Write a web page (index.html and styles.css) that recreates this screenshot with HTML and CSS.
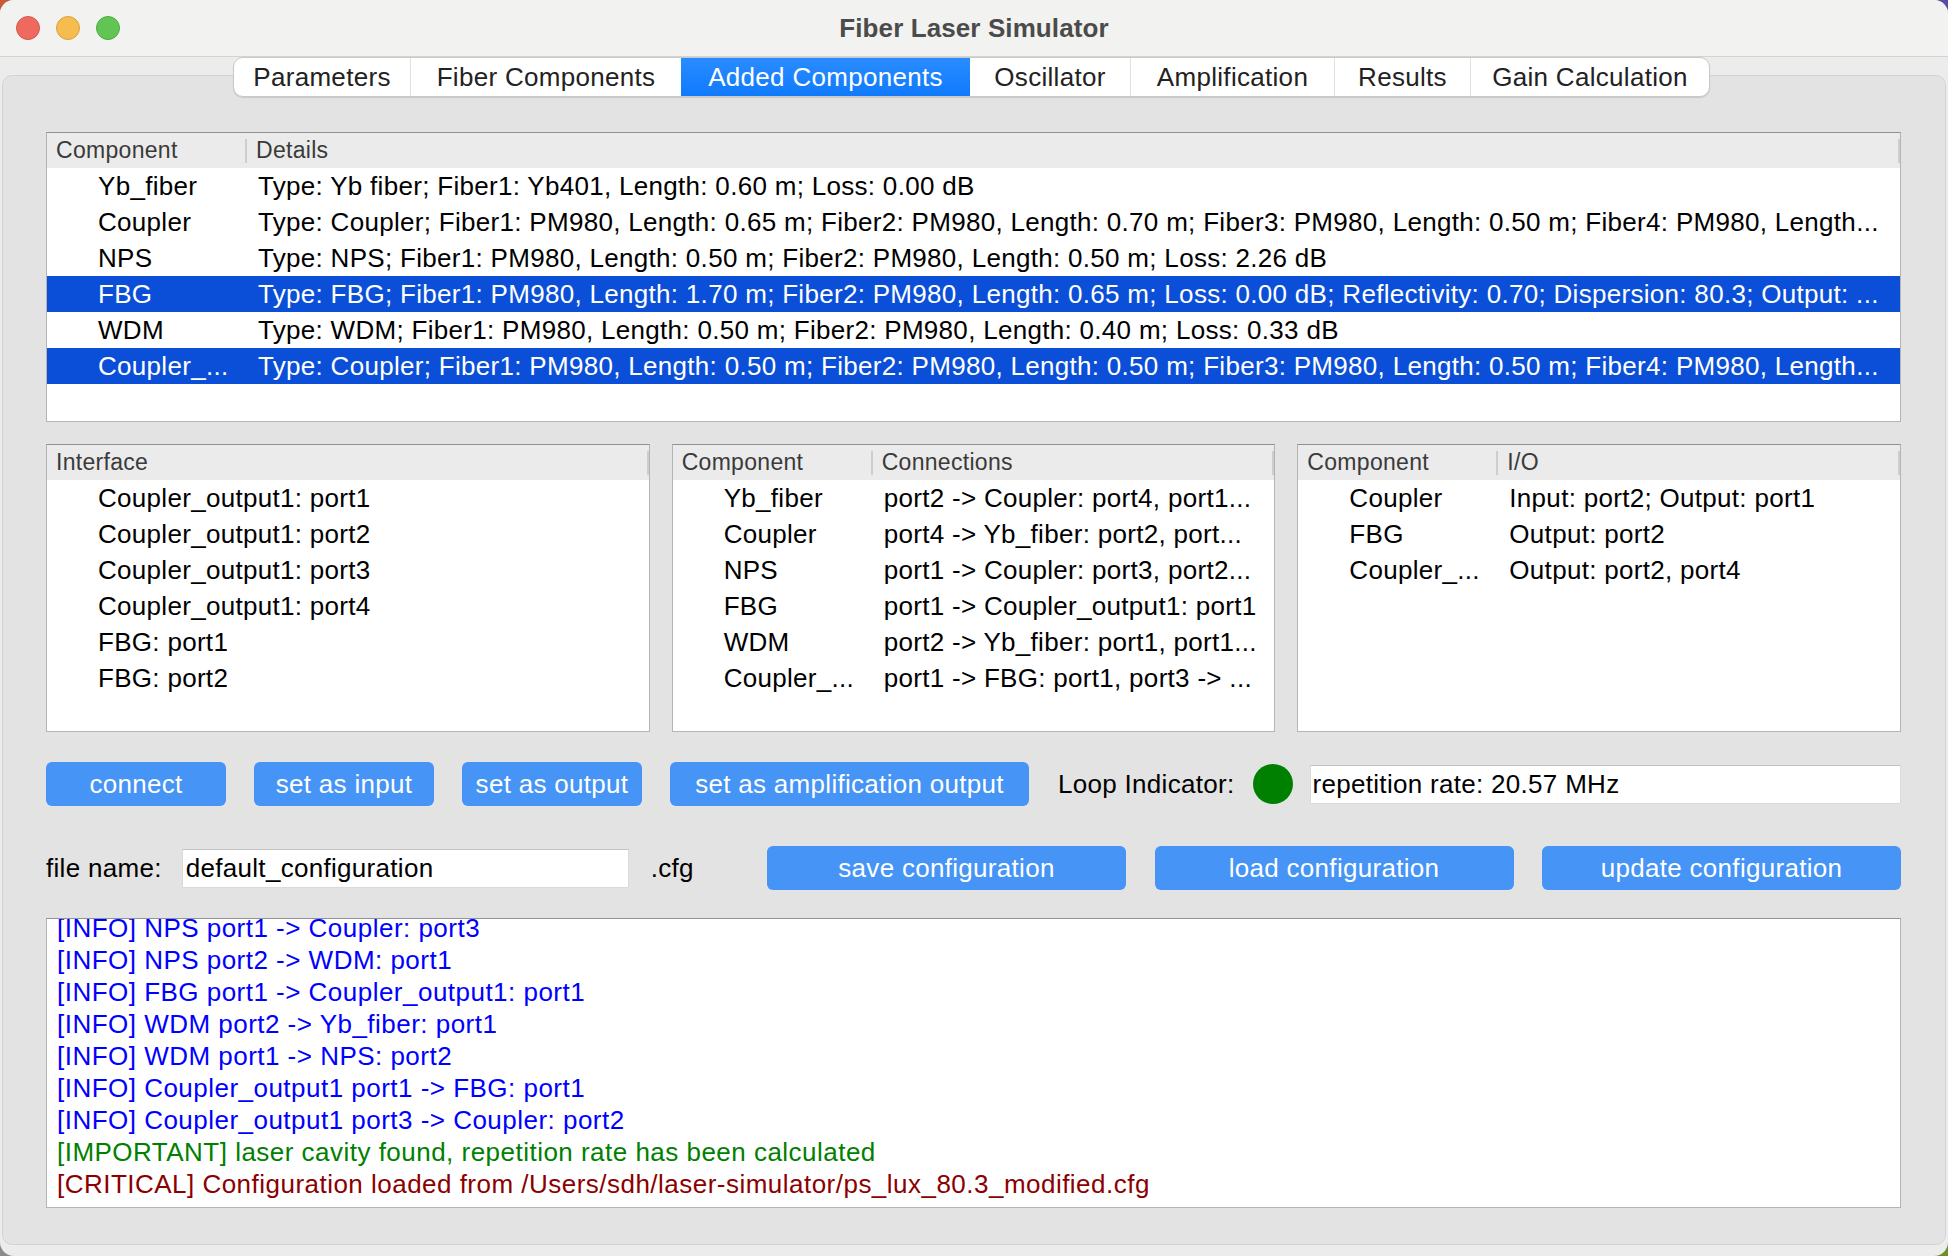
FILE: index.html
```html
<!DOCTYPE html>
<html lang="en">
<head>
<meta charset="utf-8">
<title>Fiber Laser Simulator</title>
<link rel="stylesheet" href="styles.css">
</head>
<body>
<div class="window">
  <div class="titlebar">
    <div class="lights">
      <span class="light red"></span>
      <span class="light yellow"></span>
      <span class="light green"></span>
    </div>
    <div class="title">Fiber Laser Simulator</div>
    <div></div>
  </div>

  <div class="tabs-wrap">
    <div class="tabs">
      <div class="tab t1">Parameters</div>
      <div class="tab t2">Fiber Components</div>
      <div class="tab t3 active">Added Components</div>
      <div class="tab t4">Oscillator</div>
      <div class="tab t5">Amplification</div>
      <div class="tab t6">Results</div>
      <div class="tab t7">Gain Calculation</div>
    </div>
  </div>

  <div class="pane">
    <div class="tree tree-top">
      <div class="thead">
        <div class="th c1">Component</div>
        <div class="th c2 last">Details</div>
      </div>
      <div class="tr"><div class="td c1">Yb_fiber</div><div class="td c2">Type: Yb fiber; Fiber1: Yb401, Length: 0.60 m; Loss: 0.00 dB</div></div>
      <div class="tr"><div class="td c1">Coupler</div><div class="td c2">Type: Coupler; Fiber1: PM980, Length: 0.65 m; Fiber2: PM980, Length: 0.70 m; Fiber3: PM980, Length: 0.50 m; Fiber4: PM980, Length...</div></div>
      <div class="tr"><div class="td c1">NPS</div><div class="td c2">Type: NPS; Fiber1: PM980, Length: 0.50 m; Fiber2: PM980, Length: 0.50 m; Loss: 2.26 dB</div></div>
      <div class="tr sel"><div class="td c1">FBG</div><div class="td c2">Type: FBG; Fiber1: PM980, Length: 1.70 m; Fiber2: PM980, Length: 0.65 m; Loss: 0.00 dB; Reflectivity: 0.70; Dispersion: 80.3; Output: ...</div></div>
      <div class="tr"><div class="td c1">WDM</div><div class="td c2">Type: WDM; Fiber1: PM980, Length: 0.50 m; Fiber2: PM980, Length: 0.40 m; Loss: 0.33 dB</div></div>
      <div class="tr sel"><div class="td c1">Coupler_...</div><div class="td c2">Type: Coupler; Fiber1: PM980, Length: 0.50 m; Fiber2: PM980, Length: 0.50 m; Fiber3: PM980, Length: 0.50 m; Fiber4: PM980, Length...</div></div>
    </div>

    <div class="grid3">
      <div class="tree">
        <div class="thead">
          <div class="th last">Interface</div>
        </div>
        <div class="tr"><div class="td c1 wide">Coupler_output1: port1</div></div>
        <div class="tr"><div class="td c1 wide">Coupler_output1: port2</div></div>
        <div class="tr"><div class="td c1 wide">Coupler_output1: port3</div></div>
        <div class="tr"><div class="td c1 wide">Coupler_output1: port4</div></div>
        <div class="tr"><div class="td c1 wide">FBG: port1</div></div>
        <div class="tr"><div class="td c1 wide">FBG: port2</div></div>
      </div>

      <div class="tree">
        <div class="thead">
          <div class="th c1">Component</div>
          <div class="th c2 last">Connections</div>
        </div>
        <div class="tr"><div class="td c1">Yb_fiber</div><div class="td c2">port2 -&gt; Coupler: port4, port1...</div></div>
        <div class="tr"><div class="td c1">Coupler</div><div class="td c2">port4 -&gt; Yb_fiber: port2, port...</div></div>
        <div class="tr"><div class="td c1">NPS</div><div class="td c2">port1 -&gt; Coupler: port3, port2...</div></div>
        <div class="tr"><div class="td c1">FBG</div><div class="td c2">port1 -&gt; Coupler_output1: port1</div></div>
        <div class="tr"><div class="td c1">WDM</div><div class="td c2">port2 -&gt; Yb_fiber: port1, port1...</div></div>
        <div class="tr"><div class="td c1">Coupler_...</div><div class="td c2">port1 -&gt; FBG: port1, port3 -&gt; ...</div></div>
      </div>

      <div class="tree">
        <div class="thead">
          <div class="th c1">Component</div>
          <div class="th c2 last">I/O</div>
        </div>
        <div class="tr"><div class="td c1">Coupler</div><div class="td c2">Input: port2; Output: port1</div></div>
        <div class="tr"><div class="td c1">FBG</div><div class="td c2">Output: port2</div></div>
        <div class="tr"><div class="td c1">Coupler_...</div><div class="td c2">Output: port2, port4</div></div>
      </div>
    </div>

    <div class="actions">
      <div class="btn w180">connect</div>
      <div class="btn w180">set as input</div>
      <div class="btn w180">set as output</div>
      <div class="btn w359">set as amplification output</div>
      <div class="loop">
        <span class="loop-label">Loop Indicator:</span>
        <span class="indicator"></span>
        <div class="field grow">repetition rate: 20.57 MHz</div>
      </div>
    </div>

    <div class="filerow">
      <span class="file-label">file name:</span>
      <div class="field fname">default_configuration</div>
      <span class="ext">.cfg</span>
      <div class="cfg-buttons">
        <div class="btn w359">save configuration</div>
        <div class="btn w359">load configuration</div>
        <div class="btn w359">update configuration</div>
      </div>
    </div>

    <div class="log">
      <div class="log-inner">
        <div class="info">[INFO] NPS port1 -&gt; Coupler: port3</div>
        <div class="info">[INFO] NPS port2 -&gt; WDM: port1</div>
        <div class="info">[INFO] FBG port1 -&gt; Coupler_output1: port1</div>
        <div class="info">[INFO] WDM port2 -&gt; Yb_fiber: port1</div>
        <div class="info">[INFO] WDM port1 -&gt; NPS: port2</div>
        <div class="info">[INFO] Coupler_output1 port1 -&gt; FBG: port1</div>
        <div class="info">[INFO] Coupler_output1 port3 -&gt; Coupler: port2</div>
        <div class="important">[IMPORTANT] laser cavity found, repetition rate has been calculated</div>
        <div class="critical">[CRITICAL] Configuration loaded from /Users/sdh/laser-simulator/ps_lux_80.3_modified.cfg</div>
      </div>
    </div>
  </div>
</div>
</body>
</html>
```

FILE: styles.css
```css
* { box-sizing: border-box; }

html, body {
  margin: 0;
  padding: 0;
}

body {
  width: 1948px;
  height: 1256px;
  overflow: hidden;
  background: conic-gradient(#5b4aa8 0deg 90deg, #6b8e2b 90deg 180deg, #8a8a8a 180deg 270deg, #c45d36 270deg 360deg);
  font-family: "Liberation Sans", Arial, sans-serif;
  font-size: 26px;
  letter-spacing: 0.3px;
  color: #000;
}

.window {
  width: 1948px;
  height: 1256px;
  border-radius: 14px;
  overflow: hidden;
  background: #ececec;
  display: flex;
  flex-direction: column;
}

/* ---------- title bar ---------- */
.titlebar {
  flex: none;
  height: 57px;
  background: #f2f2f0;
  border-bottom: 1px solid #d3d3d3;
  display: grid;
  grid-template-columns: 1fr auto 1fr;
  align-items: center;
}

.lights {
  display: flex;
  gap: 16px;
  padding-left: 16px;
}

.light {
  width: 24px;
  height: 24px;
  border-radius: 50%;
  display: block;
}
.light.red { background: #ee6a5f; border: 1px solid #d5574c; }
.light.yellow { background: #f5bd4f; border: 1px solid #d9a23e; }
.light.green { background: #61c554; border: 1px solid #4fab43; }

.title {
  font-weight: bold;
  font-size: 26px;
  letter-spacing: 0.1px;
  color: #4b4b4b;
}

/* ---------- tabs ---------- */
.tabs-wrap {
  flex: none;
  height: 40px;
  padding-left: 233px;
  display: flex;
  position: relative;
  z-index: 1;
}

.tabs {
  display: flex;
  height: 40px;
  background: #fff;
  border: 1px solid #c9c9c9;
  border-radius: 10px;
  overflow: hidden;
  box-shadow: 0 1px 1px rgba(0, 0, 0, 0.12);
}

.tab {
  display: flex;
  align-items: center;
  justify-content: center;
  color: #222;
  border-left: 1px solid #e1e1e1;
  white-space: nowrap;
}
.tab.t1 { width: 176px; border-left: none; }
.tab.t2 { width: 271px; }
.tab.t3 { width: 289px; }
.tab.t4 { width: 160px; }
.tab.t5 { width: 204px; }
.tab.t6 { width: 136px; }
.tab.t7 { width: 239px; }

.tab.active {
  background: linear-gradient(#2a8cff, #0f7afd);
  color: #fff;
  border-left: none;
}
.tab.active + .tab { border-left: none; }

/* ---------- pane ---------- */
.pane {
  flex: 1;
  margin: -22px 2px 11px;
  background: #e3e3e3;
  border: 1px solid #d3d3d3;
  border-radius: 10px;
  padding: 56px 44px 0 43px;
  display: flex;
  flex-direction: column;
}

/* ---------- tree / table views ---------- */
.tree {
  background: #fff;
  border: 1px solid #b4b4b4;
  border-top-color: #929292;
  overflow: hidden;
}

.tree-top {
  height: 290px;
  flex: none;
}

.thead {
  display: flex;
  height: 35px;
  background: #ebebeb;
  font-size: 23px;
  color: #3a3a3a;
}

.th {
  line-height: 35px;
  padding-left: 9px;
  white-space: nowrap;
}

.th.c1 {
  width: 200px;
  flex: none;
  background: linear-gradient(#cdcdcd, #cdcdcd) right center / 2px 24px no-repeat;
}

.th.last {
  flex: 1;
  background: linear-gradient(#cdcdcd, #cdcdcd) right center / 2px 24px no-repeat;
}

.tr {
  display: flex;
  height: 36px;
  line-height: 36px;
}

.tr.sel {
  background: #0b4fd8;
  color: #fff;
}

.td {
  white-space: nowrap;
  overflow: hidden;
  text-overflow: ellipsis;
}

.td.c1 {
  width: 200px;
  flex: none;
  padding-left: 51px;
  padding-right: 4px;
}

.td.c1.wide {
  width: auto;
  flex: 1;
}

.td.c2 {
  flex: 1;
  padding-left: 11px;
  padding-right: 12px;
}

.grid3 {
  flex: none;
  margin-top: 22px;
  height: 288px;
  display: grid;
  grid-template-columns: repeat(3, 1fr);
  gap: 22px;
}

/* ---------- buttons & fields ---------- */
.btn {
  height: 44px;
  flex: none;
  background: #4594f6;
  color: #fff;
  border-radius: 6px;
  display: flex;
  align-items: center;
  justify-content: center;
  white-space: nowrap;
}
.w180 { width: 180px; }
.w359 { width: 359px; }

.actions {
  flex: none;
  margin-top: 30px;
  height: 44px;
  display: flex;
  align-items: center;
  gap: 28px;
}

.loop {
  flex: 1;
  display: flex;
  align-items: center;
  gap: 17px;
  margin-left: 1px;
}

.loop-label {
  white-space: nowrap;
  margin-right: 1px;
}

.indicator {
  width: 40px;
  height: 40px;
  border-radius: 50%;
  background: #008000;
  flex: none;
}

.field {
  height: 39px;
  background: #fff;
  border: 1px solid #dadada;
  border-top-color: #c2c2c2;
  line-height: 37px;
  padding-left: 2px;
  white-space: nowrap;
}

.field.grow { flex: 1; }

.filerow {
  flex: none;
  margin-top: 40px;
  height: 44px;
  display: flex;
  align-items: center;
}

.file-label {
  white-space: nowrap;
}

.field.fname {
  width: 447px;
  margin-left: 20px;
  padding-left: 3px;
}

.ext {
  margin-left: 22px;
}

.cfg-buttons {
  margin-left: auto;
  display: flex;
  gap: 28.5px;
}

/* ---------- log ---------- */
.log {
  flex: none;
  margin-top: 28px;
  height: 290px;
  background: #fff;
  border: 1px solid #b4b4b4;
  border-top-color: #929292;
  overflow: hidden;
  padding: 0 10px;
}

.log-inner {
  margin-top: -7px;
  line-height: 32px;
  white-space: nowrap;
  letter-spacing: 0.48px;
}

.info { color: #0000ff; }
.important { color: #008000; }
.critical { color: #8b0000; }
```
